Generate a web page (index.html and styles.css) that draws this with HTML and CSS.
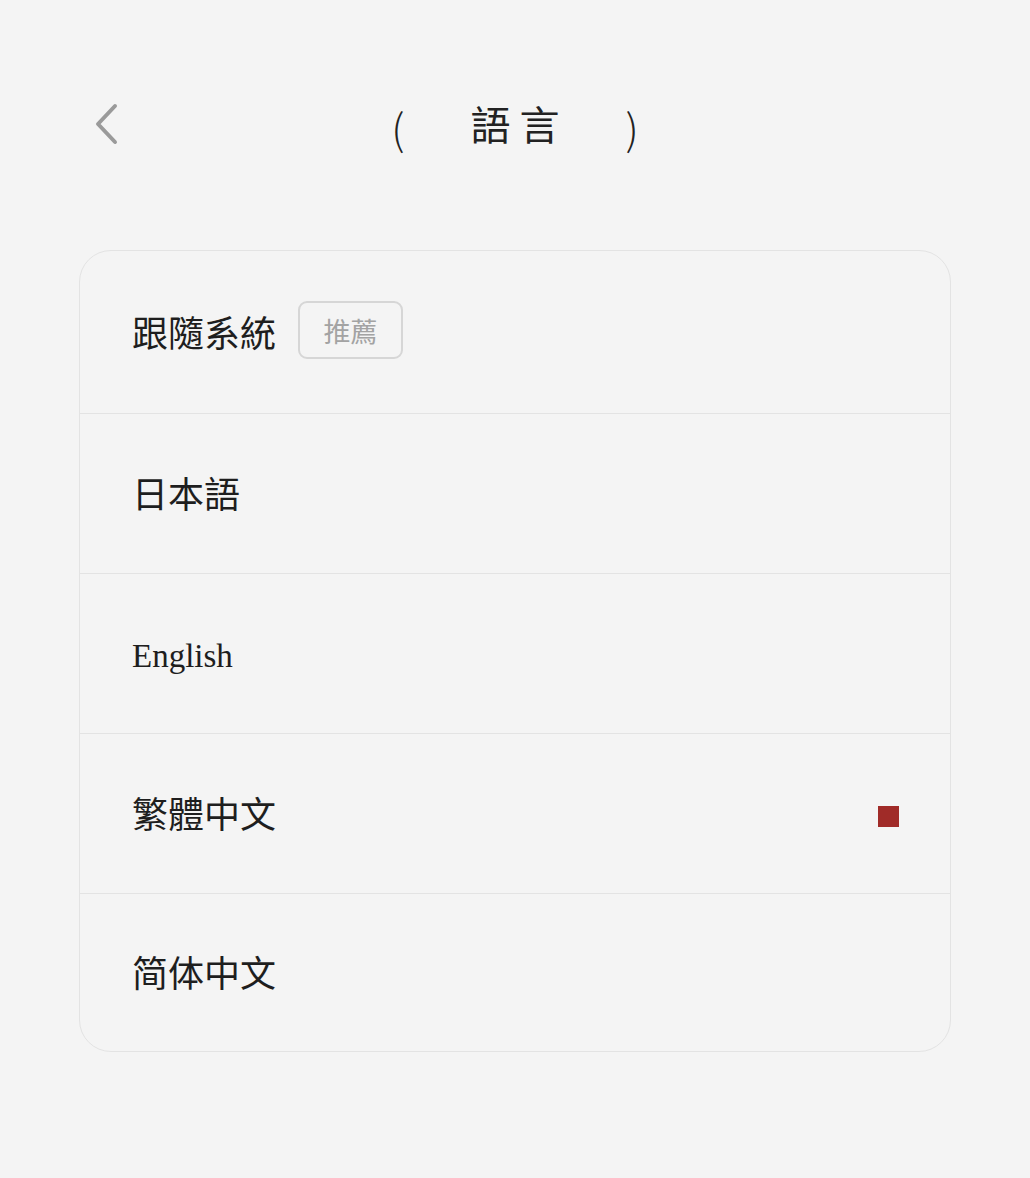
FILE: index.html
```html
<!DOCTYPE html>
<html lang="zh-Hant">
<head>
    <meta charset="UTF-8">
    <meta name="viewport" content="width=device-width, initial-scale=1.0">
    <title>語言</title>
    <link rel="stylesheet" href="styles.css">
</head>
<body>
    <div class="page">
        <div class="header">
            <a class="back" href="#">
                <svg width="26" height="42" viewBox="0 0 26 42">
                    <path d="M21 3 L4 21 L21 39" fill="none" stroke="#9a9a9a" stroke-width="4" stroke-linecap="round" stroke-linejoin="round"/>
                </svg>
            </a>
            <h1 class="title">
                <span class="paren">(</span>
                <span class="word">語言</span>
                <span class="paren">)</span>
            </h1>
        </div>

        <div class="card">
            <div class="row">
                <span class="label">跟隨系統</span>
                <span class="badge">推薦</span>
            </div>
            <div class="row">
                <span class="label">日本語</span>
            </div>
            <div class="row">
                <span class="label latin">English</span>
            </div>
            <div class="row">
                <span class="label">繁體中文</span>
                <span class="check"></span>
            </div>
            <div class="row">
                <span class="label">简体中文</span>
            </div>
        </div>
    </div>
</body>
</html>
```

FILE: styles.css
```css
body {
    margin: 0;
    background-color: #f4f4f4;
    font-family: "Liberation Serif", "Noto Sans CJK TC", serif;
    color: #1e1e1e;
}

.page {
    padding: 0 79px;
}

.header {
    position: relative;
    height: 250px;
    display: flex;
    justify-content: center;
    align-items: flex-start;
}

.back {
    position: absolute;
    left: 15px;
    top: 103px;
    display: block;
    width: 26px;
    height: 42px;
}

.title {
    margin: 99px 0 0;
    display: flex;
    align-items: center;
    gap: 66px;
    font-size: 40px;
    font-weight: normal;
    line-height: 56px;
    color: #222;
}

.title .word {
    letter-spacing: 9px;
    margin-right: -9px;
}

.title .paren {
    font-family: "Noto Sans CJK TC", sans-serif;
    font-weight: 300;
    font-size: 42px;
}

.card {
    border: 1px solid #e3e3e3;
    border-radius: 32px;
    background-color: #f4f4f4;
}

.row {
    height: 160px;
    box-sizing: border-box;
    display: flex;
    align-items: center;
    padding: 5px 51px 0 52px;
    border-top: 1px solid #e3e3e3;
}

.row:first-child {
    height: 162px;
    border-top: none;
}

.row:last-child {
    height: 158px;
}

.label {
    font-size: 36px;
    line-height: 40px;
}

.label.latin {
    font-size: 33px;
}

.badge {
    margin: 0 0 9px 22px;
    width: 105px;
    height: 58px;
    box-sizing: border-box;
    display: flex;
    align-items: center;
    justify-content: center;
    border: 2px solid #d6d6d6;
    border-radius: 9px;
    font-size: 27px;
    color: #a3a3a3;
}

.check {
    margin-left: auto;
    width: 21px;
    height: 21px;
    background-color: #a02b28;
}
```
